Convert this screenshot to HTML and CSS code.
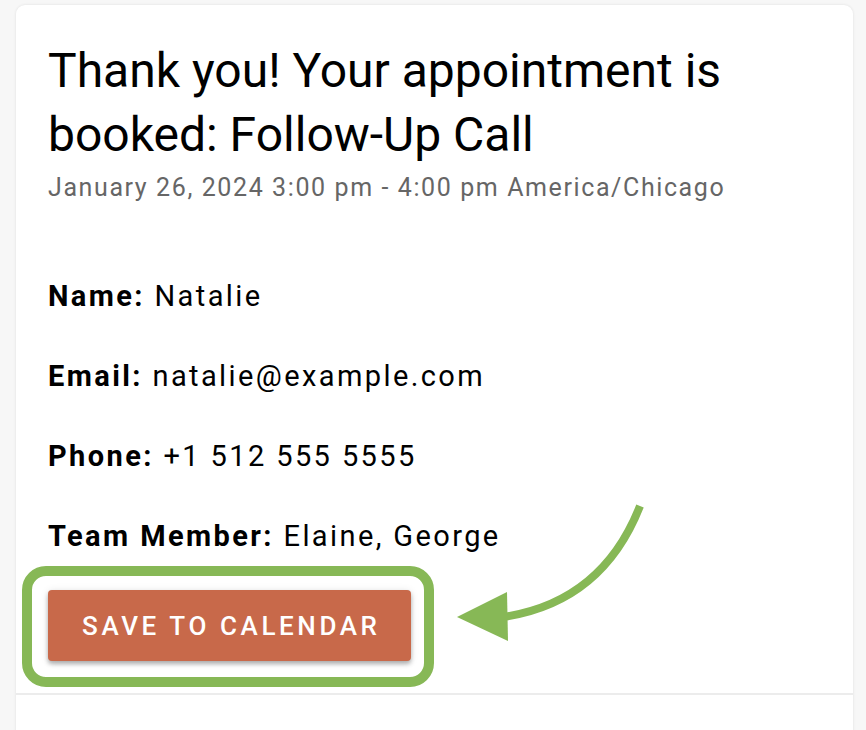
FILE: index.html
```html
<!DOCTYPE html>
<html lang="en">
<head>
<meta charset="utf-8">
<title>Appointment booked</title>
<link rel="stylesheet" href="styles.css">
</head>
<body>
<main class="card">
  <section class="confirm">
    <h1 class="title">Thank you! Your appointment is booked: Follow-Up Call</h1>
    <p class="when">January 26, 2024 3:00 pm - 4:00 pm America/Chicago</p>
    <div class="details">
      <p class="row"><strong>Name:</strong> Natalie</p>
      <p class="row"><strong>Email:</strong> natalie@example.com</p>
      <p class="row"><strong>Phone:</strong> +1 512 555 5555</p>
      <p class="row"><strong>Team Member:</strong> Elaine, George</p>
    </div>
    <div class="highlight">
      <button class="save-btn" type="button">Save to Calendar</button>
    </div>
    <svg class="arrow" width="220" height="160" viewBox="430 490 220 160" aria-hidden="true">
      <path d="M640 506 C 618 562, 578 606, 503 617" fill="none" stroke="#87b856" stroke-width="8"/>
      <polygon points="457,617 507,592 508,641" fill="#87b856"/>
    </svg>
  </section>
  <section class="more"></section>
</main>
</body>
</html>
```

FILE: styles.css
```css
html, body {
  margin: 0;
  padding: 0;
}
body {
  background: #f7f7f7;
  font-family: Roboto, "Noto Sans", Arial, sans-serif;
  color: #000;
  width: 866px;
  height: 730px;
  overflow: hidden;
}
.card {
  margin: 5px 13px 0 16px;
  background: #fff;
  border-radius: 9px 9px 0 0;
  box-shadow: 0 0 3px rgba(0, 0, 0, 0.10);
  height: 760px;
}
.confirm {
  position: relative;
  padding: 34px 32px 6px 32px;
  border-bottom: 2px solid #ececec;
}
.title {
  margin: 0;
  font-size: 48px;
  font-weight: 400;
  line-height: 64px;
  width: 700px;
}
.when {
  margin: 5px 0 0 0;
  font-size: 25px;
  line-height: 32px;
  letter-spacing: 1.6px;
  color: #666;
  white-space: nowrap;
}
.details {
  margin-top: 72px;
  display: flex;
  flex-direction: column;
  gap: 40px;
}
.row {
  margin: 0;
  font-size: 29px;
  line-height: 40px;
  letter-spacing: 2.4px;
  white-space: nowrap;
}
.row strong {
  font-weight: 700;
}
.highlight {
  display: inline-flex;
  margin: 10px 0 0 -26px;
  border: 10px solid #87b856;
  border-radius: 24px;
  padding: 14px 13px 16px 16px;
}
.save-btn {
  width: 363px;
  height: 71px;
  border: none;
  border-radius: 4px;
  background: #c8694a;
  color: #fff;
  font-family: Roboto, "Noto Sans", Arial, sans-serif;
  font-size: 26px;
  font-weight: 500;
  letter-spacing: 3.6px;
  text-indent: 3.6px;
  text-transform: uppercase;
  box-shadow: 0 3px 4px rgba(0, 0, 0, 0.28), 0 1px 8px rgba(0, 0, 0, 0.10);
  padding: 0;
}
.arrow {
  position: absolute;
  left: 414px;
  top: 485px;
}
.more {
  height: 60px;
}
```
